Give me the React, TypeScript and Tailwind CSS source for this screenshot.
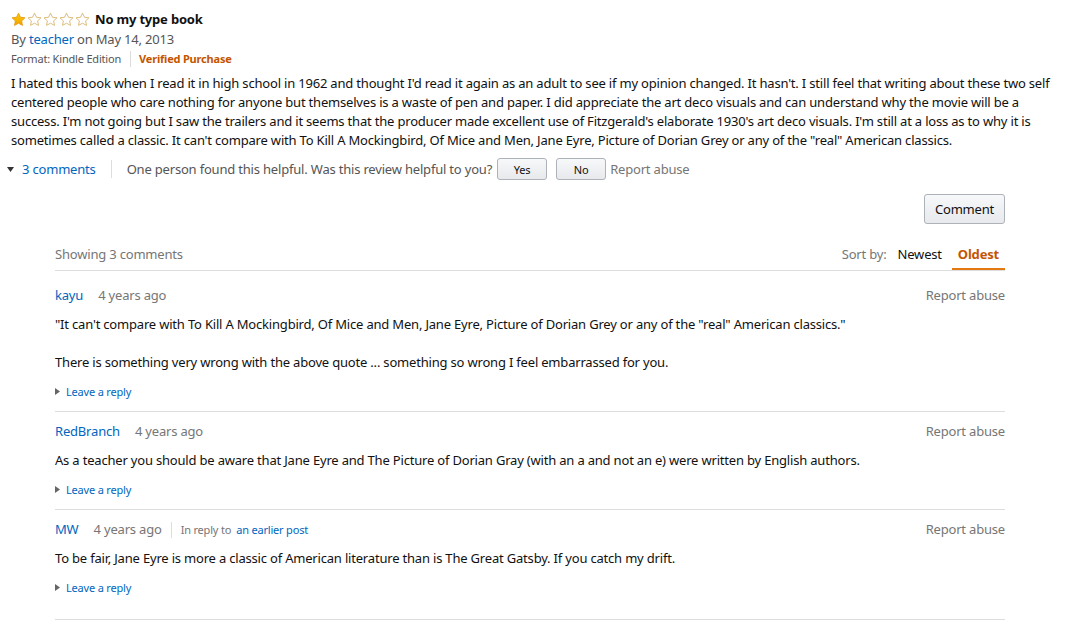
import React from "react";

const Star = ({ filled }: { filled: boolean }) => (
  <svg width="15" height="15" viewBox="0 0 24 24" className="block">
    <defs>
      <linearGradient id="sg" x1="0" y1="0" x2="0" y2="1">
        <stop offset="0" stopColor="#ffce00" />
        <stop offset="1" stopColor="#f0a000" />
      </linearGradient>
    </defs>
    <path
      d="M12 1.8l3.1 6.6 7.2.9-5.3 5 1.4 7.1L12 17.9l-6.4 3.5 1.4-7.1-5.3-5 7.2-.9z"
      fill={filled ? "url(#sg)" : "#fff"}
      stroke={filled ? "#e49a1a" : "#d8b46a"}
      strokeWidth="1.4"
      strokeLinejoin="round"
    />
  </svg>
);

const Tri = () => (
  <svg width="5" height="7" viewBox="0 0 5 7" className="inline-block">
    <path d="M0 0L5 3.5L0 7z" fill="#666" />
  </svg>
);

type C = { name: string; text: string[]; reply?: boolean };

const comments: C[] = [
  {
    name: "kayu",
    text: [
      "\"It can't compare with To Kill A Mockingbird, Of Mice and Men, Jane Eyre, Picture of Dorian Grey or any of the \"real\" American classics.\"",
      "There is something very wrong with the above quote ... something so wrong I feel embarrassed for you.",
    ],
  },
  {
    name: "RedBranch",
    text: [
      "As a teacher you should be aware that Jane Eyre and The Picture of Dorian Gray (with an a and not an e) were written by English authors.",
    ],
  },
  {
    name: "MW",
    reply: true,
    text: [
      "To be fair, Jane Eyre is more a classic of American literature than is The Great Gatsby. If you catch my drift.",
    ],
  },
];

export default function App() {
  return (
    <div
      className="w-[1073px] h-[630px] bg-white text-[#111] text-[13px] leading-[19px] tracking-[-0.19px] overflow-hidden"
      style={{ fontFamily: '"Noto Sans", "Liberation Sans", sans-serif' }}
    >
      <div className="pl-[11px] pr-[14px] pt-[10px]">
        <div className="flex items-center h-[19px]">
          <div className="flex gap-[1px]">
            <Star filled />
            <Star filled={false} />
            <Star filled={false} />
            <Star filled={false} />
            <Star filled={false} />
          </div>
          <span className="ml-[5px] font-bold text-[13px]">No my type book</span>
        </div>
        <div className="mt-[1px] text-[#555]">
          By <a className="text-[#0066c0]">teacher</a> on May 14, 2013
        </div>
        <div className="flex items-center text-[11px] h-[19px]">
          <span className="text-[#555]">Format: Kindle Edition</span>
          <span className="ml-[9px] mr-[8px] h-[16px] w-px bg-[#ddd]" />
          <span className="text-[#c45500] font-bold">Verified Purchase</span>
        </div>
        <p className="mt-[6px] leading-[19px]">
          I hated this book when I read it in high school in 1962 and thought I'd read it again as an adult to see if my opinion changed. It hasn't. I still feel that writing about these two self centered people who care nothing for anyone but themselves is a waste of pen and paper. I did appreciate the art deco visuals and can understand why the movie will be a success. I'm not going but I saw the trailers and it seems that the producer made excellent use of Fitzgerald's elaborate 1930's art deco visuals. I'm still at a loss as to why it is sometimes called a classic. It can't compare with To Kill A Mockingbird, Of Mice and Men, Jane Eyre, Picture of Dorian Grey or any of the "real" American classics.
        </p>
        <div className="flex items-center mt-[9px] h-[20px] -ml-[4px]">
          <svg width="7" height="5" viewBox="0 0 7 5" className="mr-[8px] ml-[0px]">
            <path d="M0 0H7L3.5 5z" fill="#333" />
          </svg>
          <a className="text-[#0066c0]">3 comments</a>
          <span className="mx-[15px] h-[18px] w-px bg-[#ddd]" />
          <span className="text-[#555]">One person found this helpful. Was this review helpful to you?</span>
          <button className="ml-[5px] h-[22px] w-[50px] rounded-[3px] border border-[#adb1b8] bg-gradient-to-b from-[#f7f8fa] to-[#e7e9ec] text-[11px] text-[#111]">
            Yes
          </button>
          <button className="ml-[9px] h-[22px] w-[50px] rounded-[3px] border border-[#adb1b8] bg-gradient-to-b from-[#f7f8fa] to-[#e7e9ec] text-[11px] text-[#111]">
            No
          </button>
          <span className="ml-[4px] text-[#767676]">Report abuse</span>
        </div>
        <div className="flex justify-end mr-[54px] mt-[15px]">
          <button className="h-[30px] w-[81px] rounded-[3px] border border-[#adb1b8] bg-gradient-to-b from-[#f7f8fa] to-[#e7e9ec] text-[13px] text-[#111]">
            Comment
          </button>
        </div>
        <div className="ml-[44px] mr-[54px] mt-[21px]">
          <div className="flex items-end justify-between border-b border-[#ddd] mb-[5px]">
            <span className="text-[#767676] pb-[6px]">Showing 3 comments</span>
            <div className="flex items-end">
              <span className="text-[#767676] pb-[6px] mr-[11px]">Sort by:</span>
              <span className="text-[#111] pb-[6px] mr-[10px]">Newest</span>
              <span className="text-[#c45500] font-bold pb-[4px] px-[6px] border-b-2 border-[#e47911]">Oldest</span>
            </div>
          </div>
          {comments.map((c, idx) => (
            <div
              key={c.name}
              className={
                "border-b border-[#ddd] pt-[10px] " +
                (idx === comments.length - 1 ? "pb-[22px]" : "pb-[10px]")
              }
            >
              <div className="flex items-center justify-between h-[19px]">
                <div className="flex items-center">
                  <a className="text-[#0066c0]">{c.name}</a>
                  <span className="ml-[15px] text-[#767676]">4 years ago</span>
                  {c.reply && (
                    <>
                      <span className="mx-[9px] h-[16px] w-px bg-[#ddd]" />
                      <span className="text-[11px] text-[#767676]">In reply to</span>
                      <a className="ml-[5px] text-[11px] text-[#0066c0]">an earlier post</a>
                    </>
                  )}
                </div>
                <span className="text-[#767676]">Report abuse</span>
              </div>
              <div className="mt-[10px]">
                {c.text.map((t, i) => (
                  <p key={i} className={i > 0 ? "mt-[19px]" : ""}>
                    {t}
                  </p>
                ))}
              </div>
              <div className="mt-[10px] flex items-center text-[11px]">
                <Tri />
                <a className="ml-[6px] text-[#0066c0]">Leave a reply</a>
              </div>
            </div>
          ))}
        </div>
      </div>
    </div>
  );
}
